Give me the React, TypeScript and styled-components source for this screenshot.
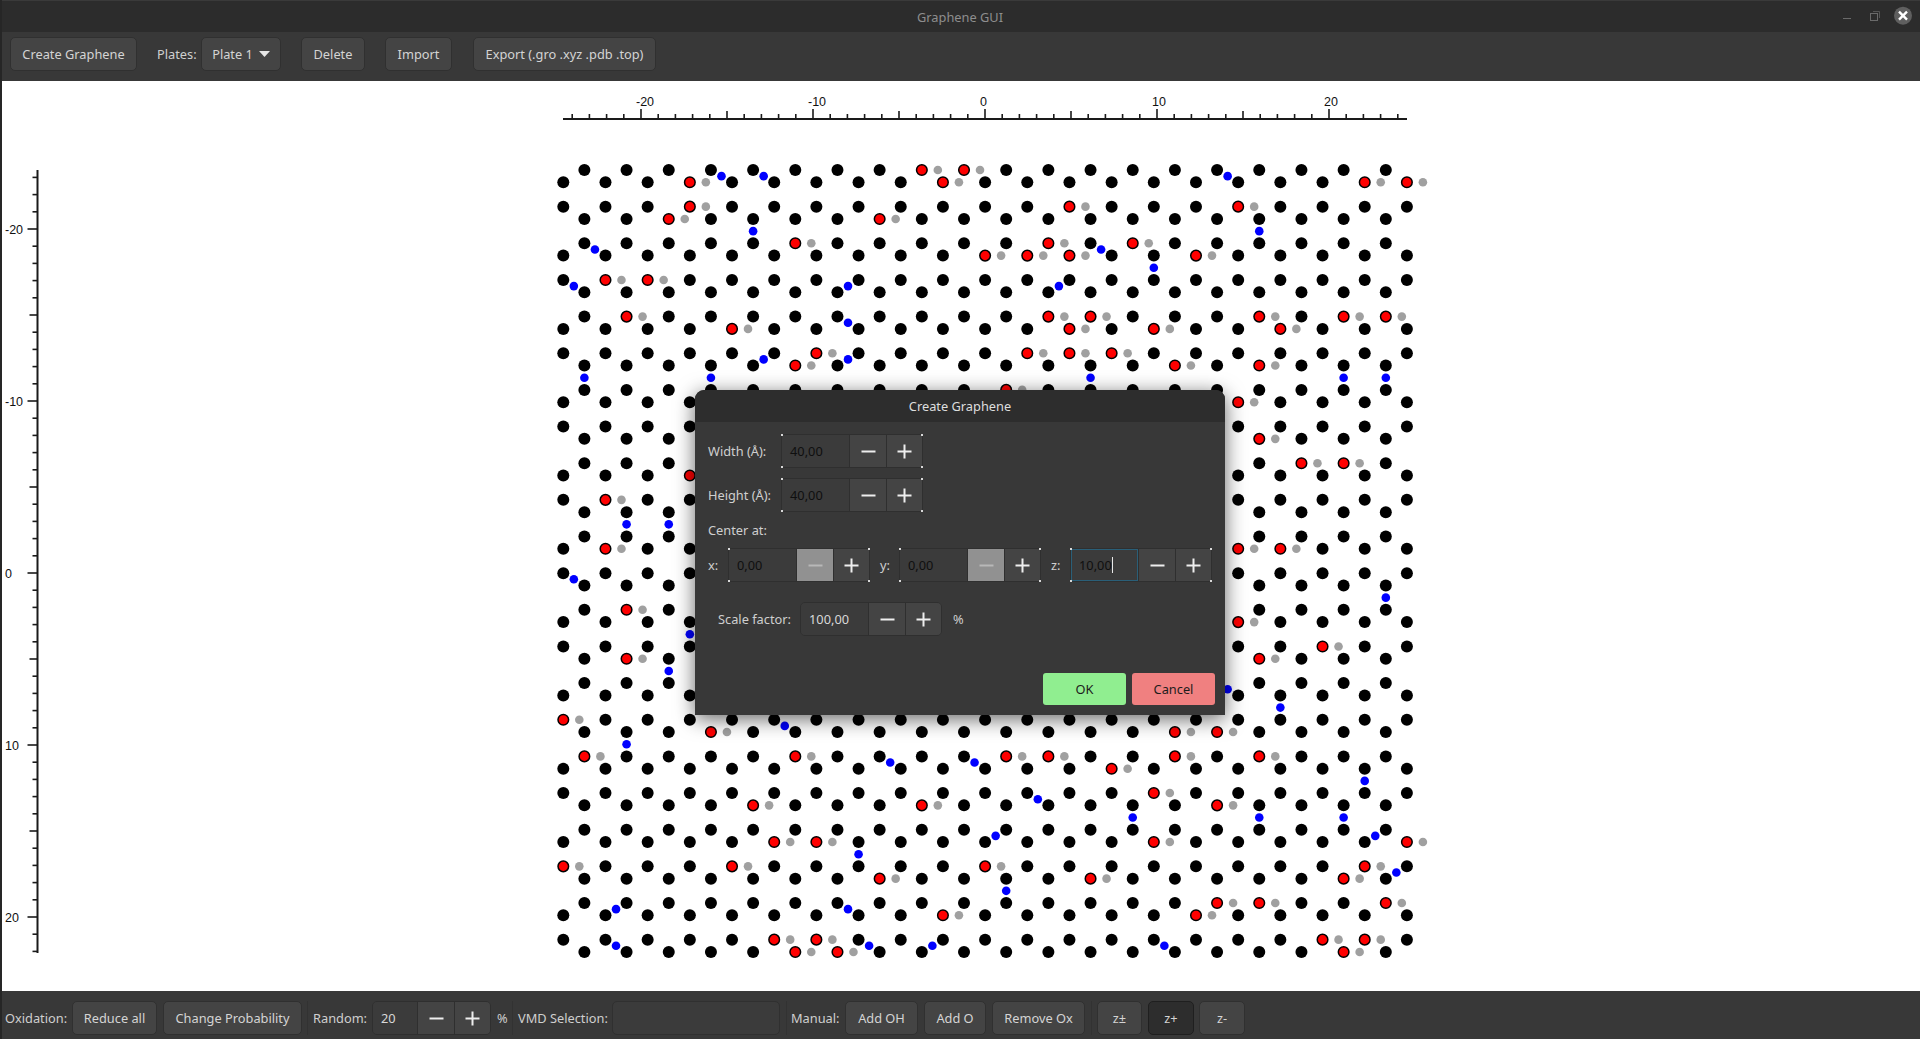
import React from 'react';
import styled, { createGlobalStyle } from 'styled-components';

const GlobalStyle = createGlobalStyle`
  html, body {
    margin: 0;
    padding: 0;
    height: 100%;
    overflow: hidden;
    background: #383838;
  }
`;

const Window = styled.div`
  position: relative;
  width: 1920px;
  height: 1039px;
  display: flex;
  flex-direction: column;
  font-family: 'Noto Sans', 'Open Sans', sans-serif;
  font-size: 12.8px;
  color: #d4d4d4;
  border-left: 2px solid #262626;
  box-sizing: border-box;
  overflow: hidden;
`;

const TitleBar = styled.div`
  height: 32px;
  box-sizing: border-box;
  flex: none;
  margin-left: -2px;
  background: #2c2c2c;
  border-top: 1px solid #3a3a3a;
  color: #8e8e8e;
  display: flex;
  align-items: center;
  justify-content: center;
  position: relative;
`;

const WindowButtons = styled.svg`
  position: absolute;
  right: 0;
  top: -1px;
`;

const Toolbar = styled.div`
  height: 49px;
  flex: none;
  box-sizing: border-box;
  padding: 5px 0 0 8px;
  background: #383838;
  display: flex;
  align-items: flex-start;
`;

const Bottombar = styled.div`
  height: 48px;
  flex: none;
  box-sizing: border-box;
  padding: 10px 0 0 3px;
  background: #383838;
  display: flex;
  align-items: flex-start;
`;

const Button = styled.div<{ $w: number; $ml?: number; $pressed?: boolean }>`
  width: ${(p) => p.$w}px;
  height: 34px;
  margin-left: ${(p) => p.$ml ?? 0}px;
  flex: none;
  box-sizing: border-box;
  display: flex;
  align-items: center;
  justify-content: center;
  gap: 6px;
  border-radius: 5px;
  border: 1px solid ${(p) => (p.$pressed ? '#1f1f1f' : '#303030')};
  background: ${(p) => (p.$pressed ? '#2d2d2d' : '#444444')};
  white-space: nowrap;
`;

const TextField = styled.div<{ $w: number }>`
  width: ${(p) => p.$w}px;
  height: 34px;
  flex: none;
  box-sizing: border-box;
  border-radius: 5px;
  border: 1px solid #303030;
  background: #3b3b3b;
`;

const Label = styled.div<{ $w: number; $ml?: number; $h?: number }>`
  width: ${(p) => p.$w}px;
  height: ${(p) => p.$h ?? 34}px;
  margin-left: ${(p) => p.$ml ?? 0}px;
  flex: none;
  display: flex;
  align-items: center;
  white-space: nowrap;
  color: #cfcfcf;
`;

const Separator = styled.div<{ $ml: number }>`
  width: 1px;
  height: 34px;
  flex: none;
  margin-left: ${(p) => p.$ml}px;
  background: #323232;
`;

const Canvas = styled.div`
  flex: 1;
  min-height: 0;
  background: #ffffff;
  line-height: 0;
`;

const SpinBox = styled.div<{ $ml?: number; $dots?: boolean }>`
  position: relative;
  flex: none;
  height: 34px;
  margin-left: ${(p) => p.$ml ?? 0}px;
  box-sizing: border-box;
  display: flex;
  border: 1px solid #2f2f2f;
  border-radius: ${(p) => (p.$dots ? 0 : 5)}px;
  overflow: ${(p) => (p.$dots ? 'visible' : 'hidden')};
  ${(p) =>
    p.$dots &&
    `&::after {
      content: '';
      position: absolute;
      inset: -1px;
      pointer-events: none;
      background:
        linear-gradient(#d8d8d8, #d8d8d8) left top / 2px 2px no-repeat,
        linear-gradient(#d8d8d8, #d8d8d8) right top / 2px 2px no-repeat,
        linear-gradient(#d8d8d8, #d8d8d8) left bottom / 2px 2px no-repeat,
        linear-gradient(#d8d8d8, #d8d8d8) right bottom / 2px 2px no-repeat;
    }`}
`;

const Entry = styled.div<{ $w: number; $dark?: boolean; $focus?: boolean }>`
  width: ${(p) => p.$w}px;
  flex: none;
  box-sizing: border-box;
  padding-left: 8px;
  display: flex;
  align-items: center;
  background: #3b3b3b;
  color: ${(p) => (p.$dark ? '#0f0f0f' : '#d8d8d8')};
  box-shadow: ${(p) => (p.$focus ? 'inset 0 0 0 1px #2a5f78' : 'none')};
`;

const Caret = styled.span`
  display: inline-block;
  width: 1px;
  height: 16px;
  background: #e8e8e8;
`;

const SpinButton = styled.div<{ $w: number; $off?: boolean }>`
  width: ${(p) => p.$w}px;
  flex: none;
  box-sizing: border-box;
  border-left: 1px solid #2f2f2f;
  background: ${(p) => (p.$off ? '#919191' : '#444444')};
  display: flex;
  align-items: center;
  justify-content: center;
`;

const Dialog = styled.div`
  position: absolute;
  left: 693px;
  top: 390px;
  width: 530px;
  height: 325px;
  background: #383838;
  border-radius: 9px 9px 0 0;
  box-shadow: 0 4px 20px rgba(0, 0, 0, 0.6);
  display: flex;
  flex-direction: column;
`;

const DialogTitle = styled.div`
  height: 32px;
  flex: none;
  background: #2d2d2d;
  border-radius: 9px 9px 0 0;
  display: flex;
  align-items: center;
  justify-content: center;
  color: #dedede;
`;

const DialogBody = styled.div`
  flex: 1;
  padding: 12px 10px 10px 13px;
  display: flex;
  flex-direction: column;
`;

const Row = styled.div<{ $mt?: number; $pl?: number }>`
  display: flex;
  align-items: center;
  flex: none;
  margin-top: ${(p) => p.$mt ?? 0}px;
  padding-left: ${(p) => p.$pl ?? 0}px;
`;

const DialogActions = styled.div`
  margin-top: auto;
  display: flex;
  justify-content: flex-end;
  gap: 6px;
`;

const ActionButton = styled.div<{ $bg: string }>`
  width: 83px;
  height: 32px;
  box-sizing: border-box;
  border-radius: 3px;
  background: ${(p) => p.$bg};
  color: #1c1c1c;
  display: flex;
  align-items: center;
  justify-content: center;
`;

const Minus = ({ off }: { off?: boolean }) => (
  <svg width="15" height="15" viewBox="0 0 15 15">
    <rect x="0.5" y="6.5" width="14" height="2" fill={off ? '#b8b8b8' : '#eeeeee'} />
  </svg>
);

const Plus = () => (
  <svg width="15" height="15" viewBox="0 0 15 15">
    <rect x="0.5" y="6.5" width="14" height="2" fill="#eeeeee" />
    <rect x="6.5" y="0.5" width="2" height="14" fill="#eeeeee" />
  </svg>
);

type SpinProps = {
  value: string;
  entry?: number;
  ml?: number;
  dots?: boolean;
  dark?: boolean;
  off?: boolean;
  focus?: boolean;
};

function Spin({ value, entry = 67, ml, dots, dark, off, focus }: SpinProps) {
  return (
    <SpinBox $ml={ml} $dots={dots}>
      <Entry $w={entry} $dark={dark} $focus={focus}>
        {value}
        {focus && <Caret />}
      </Entry>
      <SpinButton $w={37} $off={off}>
        <Minus off={off} />
      </SpinButton>
      <SpinButton $w={36}>
        <Plus />
      </SpinButton>
    </SpinBox>
  );
}

// lattice: r = row (0-43), c = column (0-40)
const X0 = 563.3;
const DX = 21.09;
const Y0 = 170;
const rowY = (r: number) => Y0 + 36.65 * Math.floor(r / 2) + 12.3 * (r % 2);
const colX = (c: number) => X0 + DX * c;

const hydroxyl: [number, number][] = [
  [0, 17], [0, 19], [1, 6], [1, 18], [1, 38], [1, 40], [2, 6], [2, 24], [2, 32], [3, 5], [3, 15],
  [4, 11], [4, 23], [4, 27], [5, 20], [5, 22], [5, 24], [5, 30], [6, 2], [6, 4], [8, 3], [8, 23],
  [8, 25], [8, 33], [8, 37], [8, 39], [9, 8], [9, 24], [9, 28], [9, 34], [10, 12], [10, 22], [10, 24],
  [10, 26], [11, 11], [11, 29], [11, 33], [12, 21], [13, 32], [15, 33], [16, 35], [16, 37], [17, 6],
  [18, 2], [21, 2], [21, 32], [21, 34], [24, 3], [25, 32], [26, 36], [27, 3], [27, 33], [30, 0],
  [31, 7], [31, 29], [31, 31], [32, 1], [32, 11], [32, 21], [32, 23], [32, 29], [32, 33], [33, 26],
  [34, 28], [35, 9], [35, 17], [35, 31], [37, 10], [37, 12], [37, 28], [37, 40], [38, 0], [38, 8],
  [38, 20], [38, 38], [39, 15], [39, 25], [39, 37], [40, 31], [40, 33], [40, 39], [41, 18], [41, 30],
  [42, 10], [42, 12], [42, 36], [42, 38], [43, 11], [43, 13], [43, 37],
];

// epoxide sits on the bond between row r and r + 1
const epoxide: [number, number][] = [
  [0, 7.5], [0, 9.5], [0, 31.5], [3, 9], [3, 33], [4, 1.5], [4, 25.5], [5, 28], [6, 0.5], [6, 13.5],
  [6, 23.5], [8, 13.5], [10, 9.5], [10, 13.5], [11, 1], [11, 7], [11, 25], [11, 37], [11, 39], [19, 3],
  [19, 5], [22, 0.5], [23, 39], [25, 6], [27, 5], [28, 31.5], [29, 34], [30, 10.5], [31, 3], [32, 15.5],
  [32, 19.5], [33, 38], [34, 22.5], [35, 27], [35, 33], [35, 37], [36, 20.5], [36, 38.5], [37, 14],
  [38, 39.5], [39, 21], [40, 2.5], [40, 13.5], [42, 2.5], [42, 14.5], [42, 17.5], [42, 28.5],
];

const redKeys = new Set(hydroxyl.map(([r, c]) => r + ':' + c));

const carbons: [number, number][] = [];
for (let r = 0; r < 44; r++) {
  const start = r % 4 === 0 || r % 4 === 3 ? 1 : 0;
  for (let c = start; c <= 40; c += 2) {
    if (!redKeys.has(r + ':' + c)) carbons.push([r, c]);
  }
}

const PX_PER_A = 17.2;
const ticks = (from: number, to: number) => {
  const out: number[] = [];
  for (let k = from; k <= to; k++) out.push(k);
  return out;
};
const tickLen = (k: number) => (k % 10 === 0 ? 10 : k % 5 === 0 ? 8 : 5);

function Plot() {
  return (
    <svg width="1918" height="910" viewBox="2 81 1918 910" fontFamily="'Liberation Sans', Arial, sans-serif" fontSize="12.5">
      <g stroke="#1a1a1a">
        <line x1="563" y1="119" x2="1407" y2="119" strokeWidth="2" />
        {ticks(-24, 24).map((k) => (
          <line key={k} x1={985 + k * PX_PER_A} x2={985 + k * PX_PER_A} y1={119} y2={119 - tickLen(k)} strokeWidth="1.6" />
        ))}
        <line x1="37.5" y1="170" x2="37.5" y2="953" strokeWidth="2" />
        {ticks(-23, 22).map((k) => (
          <line key={k} y1={573 + k * PX_PER_A} y2={573 + k * PX_PER_A} x1={37.5} x2={37.5 - tickLen(k)} strokeWidth="1.6" />
        ))}
      </g>
      <g fill="#111111">
        {[-20, -10, 0, 10, 20].map((k) => (
          <text key={k} x={980 + k * PX_PER_A} y={106}>
            {k}
          </text>
        ))}
        {[-20, -10, 0, 10, 20].map((k) => (
          <text key={k} x={5} y={577.5 + k * PX_PER_A}>
            {k}
          </text>
        ))}
      </g>
      {carbons.map(([r, c]) => (
        <circle key={r + '-' + c} cx={colX(c)} cy={rowY(r)} r={6} fill="#000000" />
      ))}
      {hydroxyl.map(([r, c]) => (
        <g key={r + '-' + c}>
          <circle cx={colX(c) + 16} cy={rowY(r)} r={4.3} fill="#a0a0a0" />
          <circle cx={colX(c)} cy={rowY(r)} r={5.3} fill="#ff0000" stroke="#000000" strokeWidth="1.5" />
        </g>
      ))}
      {epoxide.map(([r, c]) => (
        <circle key={r + '-' + c} cx={colX(c)} cy={(rowY(r) + rowY(r + 1)) / 2} r={4.3} fill="#0000ff" />
      ))}
    </svg>
  );
}

export default function App() {
  return (
    <Window>
      <GlobalStyle />
      <TitleBar>
        Graphene GUI
        <WindowButtons width="100" height="32" viewBox="1820 0 100 32">
          <line x1="1843" y1="18.5" x2="1851" y2="18.5" stroke="#6a6a6a" strokeWidth="1" />
          <rect x="1870.5" y="13.5" width="7" height="7" fill="none" stroke="#6a6a6a" />
          <path d="M1873 11.5h6.5v6.5" fill="none" stroke="#555555" />
          <circle cx="1903" cy="15.7" r="9" fill="#5f5f5f" />
          <path d="M1899 11.7l8 8M1907 11.7l-8 8" stroke="#ffffff" strokeWidth="2.4" />
        </WindowButtons>
      </TitleBar>
      <Toolbar>
        <Button $w={127}>Create Graphene</Button>
        <Label $w={40} $ml={20}>Plates:</Label>
        <Button $w={80} $ml={4}>
          Plate 1
          <svg width="11" height="6" viewBox="0 0 11 6">
            <polygon points="0,0 11,0 5.5,6" fill="#e6e6e6" />
          </svg>
        </Button>
        <Button $w={64} $ml={20}>Delete</Button>
        <Button $w={67} $ml={20}>Import</Button>
        <Button $w={183} $ml={21}>Export (.gro .xyz .pdb .top)</Button>
      </Toolbar>
      <Canvas>
        <Plot />
      </Canvas>
      <Bottombar>
        <Label $w={67}>Oxidation:</Label>
        <Button $w={85}>Reduce all</Button>
        <Button $w={139} $ml={6}>Change Probability</Button>
        <Separator $ml={5} />
        <Label $w={59} $ml={5}>Random:</Label>
        <Spin value="20" entry={44} />
        <Label $w={15} $ml={6}>%</Label>
        <Separator $ml={0} />
        <Label $w={94} $ml={5}>VMD Selection:</Label>
        <TextField $w={168} />
        <Separator $ml={6} />
        <Label $w={54} $ml={4}>Manual:</Label>
        <Button $w={73}>Add OH</Button>
        <Button $w={62} $ml={6}>Add O</Button>
        <Button $w={93} $ml={6}>Remove Ox</Button>
        <Separator $ml={6} />
        <Button $w={45} $ml={5}>z±</Button>
        <Button $w={46} $ml={6} $pressed>z+</Button>
        <Button $w={46} $ml={5}>z-</Button>
      </Bottombar>
      <Dialog>
        <DialogTitle>Create Graphene</DialogTitle>
        <DialogBody>
          <Row>
            <Label $w={73}>Width (Å):</Label>
            <Spin value="40,00" dots dark />
          </Row>
          <Row $mt={10}>
            <Label $w={73}>Height (Å):</Label>
            <Spin value="40,00" dots dark />
          </Row>
          <Row $mt={8}>
            <Label $w={100} $h={20}>Center at:</Label>
          </Row>
          <Row $mt={8}>
            <Label $w={20}>x:</Label>
            <Spin value="0,00" dots dark off />
            <Label $w={19} $ml={10}>y:</Label>
            <Spin value="0,00" dots dark off />
            <Label $w={19} $ml={10}>z:</Label>
            <Spin value="10,00" dots dark focus />
          </Row>
          <Row $mt={20} $pl={10}>
            <Label $w={82}>Scale factor:</Label>
            <Spin value="100,00" />
            <Label $w={20} $ml={11}>%</Label>
          </Row>
          <DialogActions>
            <ActionButton $bg="#90ee90">OK</ActionButton>
            <ActionButton $bg="#f08080">Cancel</ActionButton>
          </DialogActions>
        </DialogBody>
      </Dialog>
    </Window>
  );
}
